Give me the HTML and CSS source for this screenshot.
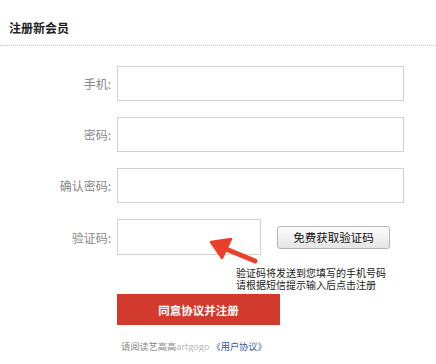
FILE: index.html
```html
<!DOCTYPE html>
<html lang="zh-CN">
<head>
    <meta charset="UTF-8">
    <title>注册新会员</title>
    <link rel="stylesheet" href="styles.css">
</head>
<body>
    <div class="page">
        <h2 class="title">注册新会员</h2>
        <form class="reg-form">
            <div class="row">
                <label for="mobile">手机:</label>
                <input type="text" id="mobile" class="field">
            </div>
            <div class="row">
                <label for="pwd">密码:</label>
                <input type="password" id="pwd" class="field">
            </div>
            <div class="row">
                <label for="pwd2">确认密码:</label>
                <input type="password" id="pwd2" class="field">
            </div>
            <div class="row">
                <label for="code">验证码:</label>
                <input type="text" id="code" class="field short">
                <button type="button" class="btn-code">免费获取验证码</button>
            </div>
            <p class="hint"><span>验证码将发送到您填写的手机号码</span><span>请根据短信提示输入后点击注册</span></p>
            <button type="submit" class="btn-submit">同意协议并注册</button>
            <p class="agree">请阅读艺高高<span class="brand">artgogo</span> <a href="#">《用户协议》</a></p>

            <svg class="arrow" width="52" height="28" viewBox="0 0 52 28">
                <path d="M47 23 L13 9" stroke="#e8412b" stroke-width="5" stroke-linecap="round" fill="none"/>
                <path d="M3 4 L23 1 L14 20 Z" fill="#e8412b" stroke="#e8412b" stroke-width="2.5" stroke-linejoin="round"/>
            </svg>
        </form>
    </div>
</body>
</html>
```

FILE: styles.css
```css
body { margin: 0; font-family: "Noto Sans CJK SC", "Liberation Sans", sans-serif; color: #333; background: #fff; }
.page { width: 436px; }
.title { margin: 0; padding: 19px 0 9px 9px; font-size: 12px; line-height: 17px; font-weight: bold; color: #222; border-bottom: 1px dotted #c8c8c8; }
.reg-form { position: relative; margin-top: 20px; }
.row { display: flex; align-items: center; margin-bottom: 16px; }
.row label { width: 111px; padding-right: 6px; text-align: right; font-size: 12px; color: #888; }
.field { box-sizing: border-box; width: 287px; height: 35px; margin: 0; border: 1px solid #d2d2d2; background: #fff; }
.field.short { width: 144px; height: 36px; }
.btn-code { box-sizing: border-box; width: 113px; height: 23px; margin-left: 16px; padding: 0; font-family: inherit; font-size: 11.5px; color: #111; background: linear-gradient(#fdfdfd, #e4e4e4); border: 1px solid #b5b5b5; border-radius: 3px; }
.hint { margin: -4px 0 0 236px; font-size: 10px; color: #222; }
.hint span { display: block; height: 12px; line-height: 12px; }
.btn-submit { display: block; box-sizing: border-box; width: 163px; height: 31px; margin: 3px 0 0 117px; padding: 0; font-family: inherit; font-size: 11.5px; font-weight: bold; color: #fff; background: #d23a2e; border: none; }
.agree { margin: 15px 0 0 121px; font-size: 9.2px; line-height: 12px; color: #888; }
.agree .brand { color: #bbb; }
.agree a { color: #3b5b9a; text-decoration: none; }
.arrow { position: absolute; left: 208px; top: 172px; }
```
